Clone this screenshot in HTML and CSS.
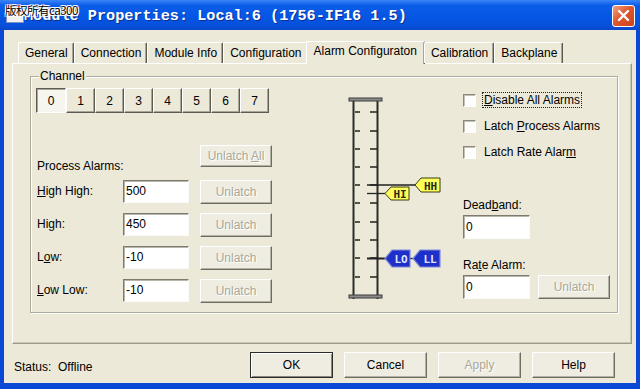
FILE: index.html
```html
<!DOCTYPE html>
<html lang="en">
<head>
  <meta charset="UTF-8">
  <title>Module Properties</title>
  <link rel="stylesheet" href="styles.css">
</head>
<body>
  <div class="window">
    <div class="titlebar">
      <span class="app-icon"></span>
      <span class="title">Module Properties: Local:6 (1756-IF16 1.5)</span>
      <span class="close-btn">
        <svg width="13" height="13" viewBox="0 0 13 13"><path d="M2 2 L11 11 M11 2 L2 11" stroke="#fff" stroke-width="2.4" stroke-linecap="round"/></svg>
      </span>
      <span class="watermark">版权所有ca300</span>
    </div>

    <div class="client">
      <div class="tabs">
        <div class="tab">General</div>
        <div class="tab">Connection</div>
        <div class="tab">Module Info</div>
        <div class="tab">Configuration</div>
        <div class="tab active">Alarm Configuraton</div>
        <div class="tab">Calibration</div>
        <div class="tab">Backplane</div>
      </div>

      <div class="panel">
        <div class="group">
          <span class="group-label">Channel</span>

          <div class="left-col">
            <div class="channels">
              <button class="ch active">0</button>
              <button class="ch">1</button>
              <button class="ch">2</button>
              <button class="ch">3</button>
              <button class="ch">4</button>
              <button class="ch">5</button>
              <button class="ch">6</button>
              <button class="ch">7</button>
            </div>

            <div class="alarm-head">
              <span class="head-label">Process Alarms:</span>
              <button class="btn disabled unlatch">Unlatch <u>A</u>ll</button>
            </div>

            <div class="alarm-row">
              <span class="row-label"><u>H</u>igh High:</span>
              <span class="field">500</span>
              <button class="btn disabled unlatch">Unlatch</button>
            </div>
            <div class="alarm-row">
              <span class="row-label">Hi<u>g</u>h:</span>
              <span class="field">450</span>
              <button class="btn disabled unlatch">Unlatch</button>
            </div>
            <div class="alarm-row">
              <span class="row-label">L<u>o</u>w:</span>
              <span class="field">-10</span>
              <button class="btn disabled unlatch">Unlatch</button>
            </div>
            <div class="alarm-row">
              <span class="row-label"><u>L</u>ow Low:</span>
              <span class="field">-10</span>
              <button class="btn disabled unlatch">Unlatch</button>
            </div>
          </div>

          <svg class="scale" width="100" height="210" viewBox="0 0 100 210">
            <g stroke="#2b2b2b" stroke-width="2" fill="none">
              <line x1="8.5" y1="3" x2="8.5" y2="204"/>
              <line x1="32.5" y1="3" x2="32.5" y2="204"/>
            </g>
            <rect x="4" y="3" width="33" height="3" fill="#8c8c8c" stroke="#3a3a3a" stroke-width="1"/>
            <rect x="4" y="200" width="33" height="3" fill="#8c8c8c" stroke="#3a3a3a" stroke-width="1"/>
            <g stroke="#222" stroke-width="1.5">
              <line x1="10" y1="17" x2="15" y2="17"/><line x1="25" y1="17" x2="32" y2="17"/>
              <line x1="10" y1="36" x2="15" y2="36"/><line x1="25" y1="36" x2="32" y2="36"/>
              <line x1="10" y1="54" x2="15" y2="54"/><line x1="25" y1="54" x2="32" y2="54"/>
              <line x1="10" y1="72" x2="15" y2="72"/><line x1="25" y1="72" x2="32" y2="72"/>
              <line x1="10" y1="90" x2="15" y2="90"/><line x1="25" y1="90" x2="32" y2="90"/>
              <line x1="10" y1="108" x2="15" y2="108"/><line x1="25" y1="108" x2="32" y2="108"/>
              <line x1="10" y1="127" x2="15" y2="127"/><line x1="25" y1="127" x2="32" y2="127"/>
              <line x1="10" y1="145" x2="15" y2="145"/><line x1="25" y1="145" x2="32" y2="145"/>
              <line x1="10" y1="163" x2="15" y2="163"/><line x1="25" y1="163" x2="32" y2="163"/>
              <line x1="10" y1="182" x2="15" y2="182"/><line x1="25" y1="182" x2="32" y2="182"/>
            </g>
            <g stroke="#222" stroke-width="1.3">
              <line x1="22" y1="90" x2="71" y2="90"/>
              <line x1="22" y1="98.5" x2="41" y2="98.5"/>
              <line x1="22" y1="163.5" x2="41" y2="163.5" stroke-width="2"/>
              <line x1="65" y1="163.5" x2="69" y2="163.5"/>
            </g>
            <g class="flag-hi">
              <polygon points="40,98.5 46,92 64,92 64,105 46,105"/>
              <text x="55" y="103">HI</text>
            </g>
            <g class="flag-hi">
              <polygon points="70,90 76,83 95,83 95,97 76,97"/>
              <text x="85.5" y="94.5">HH</text>
            </g>
            <g class="flag-lo">
              <polygon points="40,163.5 47,155 65,155 65,172 47,172"/>
              <text x="56" y="168">LO</text>
            </g>
            <g class="flag-lo">
              <polygon points="68,163.5 75,155 95,155 95,172 75,172"/>
              <text x="85" y="168">LL</text>
            </g>
          </svg>

          <div class="right-col">
            <div class="check-row first">
              <span class="checkbox"></span>
              <span class="check-label focus"><u>D</u>isable All Alarms</span>
            </div>
            <div class="check-row">
              <span class="checkbox"></span>
              <span class="check-label">Latch <u>P</u>rocess Alarms</span>
            </div>
            <div class="check-row">
              <span class="checkbox"></span>
              <span class="check-label">Latch Rate Alar<u>m</u></span>
            </div>

            <div class="field-label deadband">Dead<u>b</u>and:</div>
            <div class="field-row">
              <span class="field small">0</span>
            </div>

            <div class="field-label rate">Ra<u>t</u>e Alarm:</div>
            <div class="field-row">
              <span class="field small">0</span>
              <button class="btn disabled unlatch">Unlatch</button>
            </div>
          </div>
        </div>
      </div>

      <div class="footer">
        <span class="status">Status:&nbsp; Offline</span>
        <div class="buttons">
          <button class="btn dialog default">OK</button>
          <button class="btn dialog">Cancel</button>
          <button class="btn dialog disabled">Apply</button>
          <button class="btn dialog">Help</button>
        </div>
      </div>
    </div>
  </div>
</body>
</html>
```

FILE: styles.css
```css
html, body {
  margin: 0;
  padding: 0;
  font-family: "Liberation Sans", Arial, sans-serif;
  font-size: 12px;
  color: #000;
}

.window {
  width: 640px;
  height: 389px;
  background: #0a48d6;
  display: flex;
  flex-direction: column;
}

/* title bar */
.titlebar {
  position: relative;
  height: 30px;
  padding: 0 5px 0 6px;
  display: flex;
  align-items: center;
  background: linear-gradient(#3b86f6, #0a5ce9 18%, #0556e4 55%, #0750dc 85%, #0a47c9);
}

.app-icon {
  width: 16px;
  height: 13px;
  background: #f2f2f2;
  border: 1px solid #8090c0;
}

.title {
  flex: 1;
  margin-top: 2px;
  color: #fff;
  font-family: "Liberation Mono", "Courier New", monospace;
  font-weight: bold;
  font-size: 15.2px;
  text-shadow: 1px 1px 0 #0b2f93;
  white-space: nowrap;
}

.close-btn {
  width: 21px;
  height: 20px;
  margin-top: 1px;
  border: 1px solid #fff;
  border-radius: 3px;
  background: linear-gradient(135deg, #f0a484, #e0582f 45%, #c9401c);
  display: flex;
  align-items: center;
  justify-content: center;
}

.watermark {
  position: absolute;
  left: 5px;
  top: 2px;
  font-family: "Noto Sans CJK SC", sans-serif;
  font-size: 11.5px;
  letter-spacing: -0.5px;
  color: #000;
  text-shadow: 0 0 1px #fff, 1px 1px 0 #fff, -1px -1px 0 #fff, 1px -1px 0 #fff, -1px 1px 0 #fff;
}

/* client area */
.client {
  flex: 1;
  margin: 0 4px 6px;
  background: #ece9d8;
  display: flex;
  flex-direction: column;
}

.tabs {
  height: 21px;
  margin: 12px 0 0 14px;
  display: flex;
  align-items: flex-end;
  position: relative;
  z-index: 1;
}

.tab {
  height: 18px;
  padding: 2px 5px 0 6px;
  line-height: 17px;
  white-space: nowrap;
  background: #ece9d8;
  border-top: 1px solid #fff;
  border-left: 1px solid #fff;
  border-right: 1px solid #5c5a50;
  box-shadow: inset -1px 0 0 #a7a596;
  border-radius: 2px 2px 0 0;
}

.tab.active {
  height: 21px;
  margin: 0 -1px -1px -2px;
  padding: 1px 7px 0 7px;
}

.panel {
  height: 279px;
  margin: 0 4px 0 8px;
  border: 1px solid #9c9a8c;
  border-top-color: #fff;
  border-left-color: #fff;
  box-shadow: inset -1px -1px 0 #c9c6b6;
  display: flex;
}

.group {
  position: relative;
  flex: 1;
  margin: 12px 13px 30px 17px;
  padding: 11px 0 0 5px;
  border: 1px solid #aeac9e;
  box-shadow: inset 1px 1px 0 #fff, 1px 1px 0 #fff;
  display: flex;
  align-items: flex-start;
}

.group-label {
  position: absolute;
  left: 8px;
  top: -8px;
  padding: 0 1px;
  line-height: 14px;
  background: #ece9d8;
}

/* buttons */
button {
  font-family: inherit;
  font-size: 12px;
  margin: 0;
  padding: 0;
}

.btn {
  background: #efede2;
  border: 1px solid;
  border-color: #fff #6f6d62 #6f6d62 #fff;
  box-shadow: inset -1px -1px 0 #b3b1a3;
  color: #000;
}

.btn.disabled {
  color: #aaa797;
  text-shadow: 1px 1px 0 #fff;
}

.unlatch {
  width: 72px;
  height: 24px;
}

/* left column */
.left-col {
  width: 236px;
}

.channels {
  display: flex;
  height: 25px;
}

.ch {
  width: 29px;
  height: 25px;
  background: #ece9d8;
  border: 1px solid;
  border-color: #fff #5e5c52 #5e5c52 #fff;
  box-shadow: inset -1px -1px 0 #a8a697;
}

.ch.active {
  width: 30px;
  background: #f6f5ee;
  border-color: #5e5c52 #fff #fff #5e5c52;
  box-shadow: inset 1px 1px 0 #a8a697;
}

.alarm-head {
  height: 22px;
  margin-top: 32px;
  display: flex;
  align-items: flex-start;
}

.alarm-head .unlatch {
  height: 22px;
}

.head-label {
  flex: 1;
  padding: 14px 0 0 1px;
  line-height: 14px;
}

.alarm-row {
  height: 24px;
  margin-top: 9px;
  display: flex;
  align-items: flex-start;
}

.alarm-head + .alarm-row {
  margin-top: 13px;
}

.row-label {
  width: 86px;
  padding-left: 1px;
  line-height: 23px;
}

.field {
  width: 62px;
  height: 21px;
  padding-left: 2px;
  line-height: 20px;
  background: #fff;
  border: 1px solid;
  border-color: #7d7b70 #fafafa #fafafa #7d7b70;
  box-shadow: inset 1px 1px 0 #b8b6aa;
}

.alarm-row .field {
  margin-right: 11px;
}

/* level scale */
.scale {
  margin: 7px 0 0 73px;
  flex: none;
}

.flag-hi polygon {
  fill: #ffff5a;
  stroke: #3b3a10;
  stroke-width: 1;
}

.flag-hi text {
  fill: #2a2a10;
}

.flag-lo polygon {
  fill: #1f2fc9;
  stroke: #7f8bd8;
  stroke-width: 1.2;
}

.flag-lo text {
  fill: #dfe6ff;
}

.scale text {
  font-family: "DejaVu Sans Mono", monospace;
  font-size: 11px;
  font-weight: bold;
  text-anchor: middle;
}

/* right column */
.right-col {
  width: 147px;
  margin-left: 18px;
}

.check-row {
  height: 16px;
  margin-top: 10px;
  display: flex;
  align-items: center;
}

.check-row.first {
  margin-top: 4px;
}

.checkbox {
  width: 11px;
  height: 11px;
  background: #fdfdfb;
  border: 1px solid;
  border-color: #8a887c #fff #fff #8a887c;
  box-shadow: inset 1px 1px 0 #c4c2b6;
}

.check-label {
  margin-left: 6px;
  padding: 0 1px;
  line-height: 14px;
  white-space: nowrap;
  border: 1px solid transparent;
}

.check-label.focus {
  border: 1px dotted #222;
}

.field-label {
  line-height: 14px;
  margin-top: 19px;
}

.field-label.deadband {
  margin-top: 38px;
}

.field-row {
  margin-top: 3px;
  display: flex;
  align-items: flex-start;
}

.field.small {
  width: 63px;
  height: 22px;
  line-height: 22px;
  margin-right: 8px;
}

/* footer */
.footer {
  flex: 1;
  padding: 8px 21px 0 10px;
  display: flex;
  align-items: flex-start;
}

.status {
  flex: 1;
  line-height: 26px;
  padding-top: 2px;
}

.buttons {
  display: flex;
  gap: 11px;
}

.dialog {
  width: 83px;
  height: 26px;
}

.dialog.default {
  border: 1px solid #2a2a2a;
  box-shadow: inset 1px 1px 0 #fff, inset -1px -1px 0 #8a887c;
}
```
